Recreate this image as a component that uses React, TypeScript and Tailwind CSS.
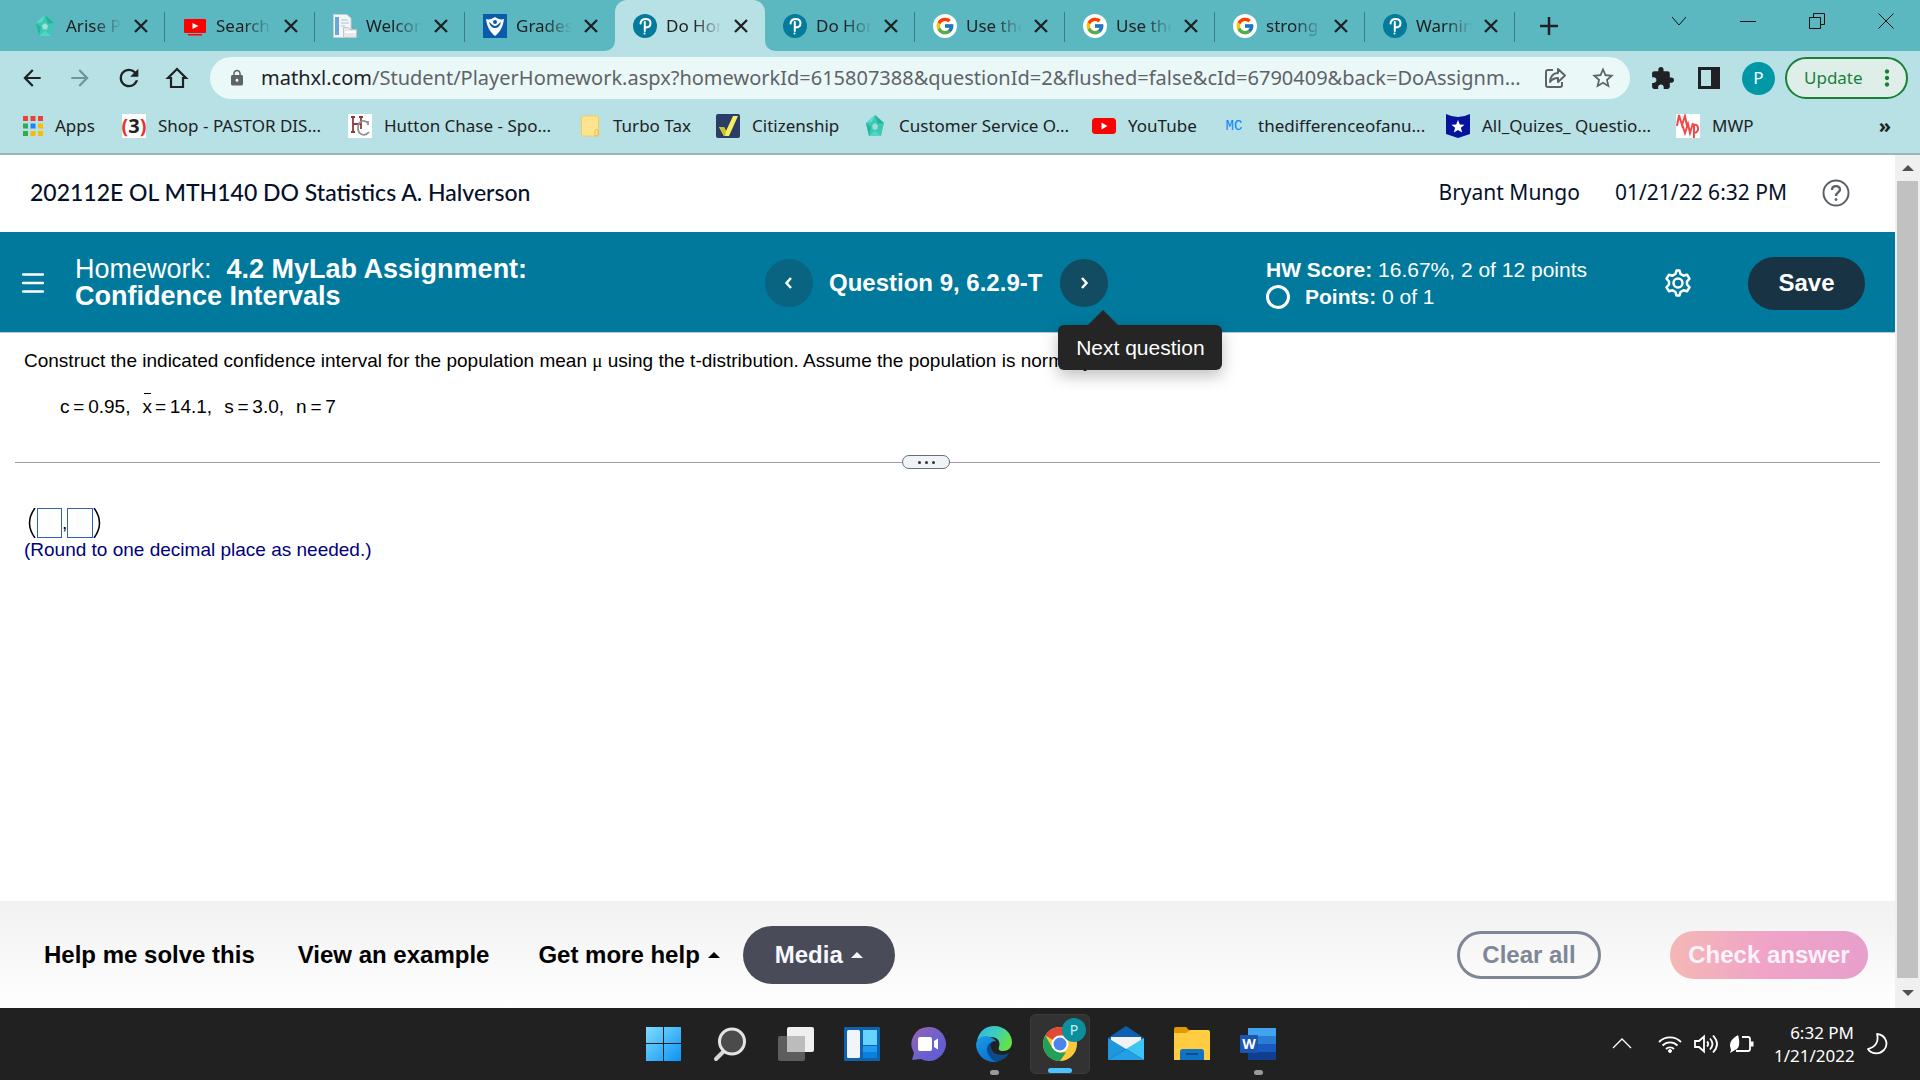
import type { ReactNode } from 'react';
import { FcGoogle } from 'react-icons/fc';
import {
  MdArrowBack,
  MdArrowForward,
  MdRefresh,
  MdLock,
  MdStarBorder,
  MdExtension,
  MdMoreVert,
} from 'react-icons/md';

/* ---------- favicons ---------- */

function PentagonIcon() {
  return (
    <svg viewBox="0 0 24 24" className="size-6">
      <path d="M12 1 21 9 18 22 6 22 3 9Z" fill="#3cc8b4" />
      <path d="M12 1 21 9 15 9.500Z" fill="#23b39c" />
      <path d="M3 9 12 1 9 8Z" fill="#5fdccb" />
      <path d="M6 22 3 9 8 13Z" fill="#22b8a0" />
      <path d="M18 22 6 22 12 17Z" fill="#55d6c4" />
      <path d="M12 9 15 11.500 14 15.500 10 15.500 9 11.500Z" fill="#9fded9" />
    </svg>
  );
}

function YouTubeTabIcon() {
  return (
    <svg viewBox="0 0 24 24" className="size-6">
      <rect x="1" y="5" width="22" height="14" rx="1" fill="#f00" />
      <rect x="5" y="20" width="14" height="1.500" fill="#f00" />
      <path d="M9.500 9v6l6-3Z" fill="#fff" />
    </svg>
  );
}

function YouTubeIcon() {
  return (
    <svg viewBox="0 0 24 24" className="size-6">
      <rect y="4" width="24" height="16" rx="3.500" fill="#f00" />
      <path d="M9.500 8.500v7l6-3.500Z" fill="#fff" />
    </svg>
  );
}

function DocumentIcon() {
  return (
    <svg viewBox="0 0 24 24" className="size-6">
      <path d="M.5.5H14l4 4v19H.5Z" fill="#f4f7fa" stroke="#c3d0da" />
      <rect x="2" y="3" width="4" height="18" fill="#6aa5da" />
      <path d="M8 6h7M8 9h8M8 12h4" stroke="#b5c3ce" />
      <path d="M10.500 13.500h5l1 2h7v8h-13Z" fill="#e6e8ea" stroke="#bfc5ca" />
      <path d="M12 18h11" stroke="#fff" strokeWidth="2" />
    </svg>
  );
}

function ShieldIcon() {
  return (
    <svg viewBox="0 0 24 24" className="size-6">
      <rect width="24" height="24" fill="#0a5bab" />
      <path d="M3 5c3 1 6 0 9-2 3 2 6 3 9 2-1 8-4 13-9 17C7 18 4 13 3 5Z" fill="#fff" />
      <circle cx="12" cy="8" r="2" fill="#0a5bab" />
      <path d="M6 8c2 1 4 4 6 4s4-3 6-4c-1 4-3 6-6 6s-5-2-6-6Z" fill="#0a5bab" />
    </svg>
  );
}

function PearsonIcon() {
  return (
    <svg viewBox="0 0 24 24" className="size-6">
      <circle cx="12" cy="12" r="12" fill="#047a9c" />
      <path
        d="M7.500 9.500C8 6.500 10 5 12.500 5c3 0 5 1.800 5 4.300 0 2.600-2.200 4.200-5.500 4.200M11.800 8v9"
        fill="none"
        stroke="#fff"
        strokeWidth="2"
        strokeLinecap="round"
      />
      <circle cx="11.500" cy="19.500" r="1" fill="#fff" />
    </svg>
  );
}

function GoogleIcon() {
  return (
    <span className="flex size-6 items-center justify-center rounded-full bg-white">
      <FcGoogle size={20} />
    </span>
  );
}

/* ---------- bookmark icons ---------- */

const appColors = ['#ea4335', '#ea4335', '#ea4335', '#34a853', '#1a84ff', '#fbbc04', '#34a853', '#fbbc04', '#fbbc04'];

function AppsIcon() {
  return (
    <svg viewBox="0 0 20 20" className="size-5">
      {appColors.map((color, i) => (
        <rect key={i} x={(i % 3) * 7.5} y={Math.floor(i / 3) * 7.5} width="5" height="5" fill={color} />
      ))}
    </svg>
  );
}

function ThreeIcon() {
  return (
    <span className="flex size-6 items-center justify-center bg-white text-[20px] leading-6 font-bold text-[#222]">
      <span className="text-[#e5352b]">(</span>3<span className="text-[#e5352b]">)</span>
    </span>
  );
}

function HuttonIcon() {
  return (
    <svg viewBox="0 0 24 24" className="size-6">
      <rect width="24" height="24" fill="#fff" />
      <path d="M5 3v15M13 3v12M5 10h8M3 3h4M11 3h4M3 18h4" fill="none" stroke="#8a3b40" strokeWidth="1.800" />
      <path d="M20 11V7M20 9c-6-5-10 0-10 5 0 7 7 9 11 4" fill="none" stroke="#909090" strokeWidth="1.800" />
    </svg>
  );
}

function FolderIcon() {
  return (
    <svg viewBox="0 0 20 24" className="h-6 w-5">
      <rect x="0.500" y="2" width="17" height="20" rx="1" fill="#ffe48f" stroke="#f1cc58" />
      <path d="M14 22v-5q0-1.500 1.500-1.500T17 17v3q0 2-2 2Z" fill="#ffe9a8" stroke="#e6b93c" />
    </svg>
  );
}

function CheckIcon() {
  return (
    <svg viewBox="0 0 24 24" className="size-6">
      <rect width="24" height="24" rx="2" fill="#2b3c66" />
      <path d="M3 13h5l2 4L17 2h5L13 22H8Z" fill="#f4ef5c" />
      <path d="M3 13h5l2 4-1 5H8Z" fill="#c9c32c" />
    </svg>
  );
}

function McIcon() {
  return (
    <span className="w-6 text-center font-['Liberation_Mono',monospace] text-[14px] leading-6 text-[#0a84ff]">MC</span>
  );
}

function PennantIcon() {
  return (
    <svg viewBox="0 0 24 24" className="size-6">
      <path d="M0 0q12 6 24 0v20l-12 4L0 20Z" fill="#06149c" />
      <path d="m12 6 1.800 4.500 4.700.3-3.600 3 1.200 4.700L12 16l-4.100 2.500 1.200-4.700-3.600-3 4.700-.3Z" fill="#fff" />
    </svg>
  );
}

function MwpIcon() {
  return (
    <svg viewBox="0 0 24 24" className="size-6">
      <rect width="24" height="24" fill="#fff" />
      <path
        d="M1 12 3 1l3 10L9 2l2 10M6 10l3 9 3-9 2 9 3-10M18 24V11c5-2 6 8 0 8"
        fill="none"
        stroke="#f04a4a"
        strokeWidth="2"
      />
    </svg>
  );
}

/* ---------- taskbar icons ---------- */

function StartIcon() {
  return (
    <svg viewBox="0 0 36 36" className="size-9">
      <defs>
        <linearGradient id="win" x1="0" y1="0" x2="1" y2="1">
          <stop offset="0" stopColor="#7fdcff" />
          <stop offset="1" stopColor="#0a93f5" />
        </linearGradient>
      </defs>
      <path d="M0 1h17v16H0ZM18 1h17v16H18ZM0 18h17v17H0ZM18 18h17v17H18Z" fill="url(#win)" />
    </svg>
  );
}

function SearchIcon() {
  return (
    <svg viewBox="0 0 36 36" className="size-9">
      <path d="m12 25-8 8" stroke="#d4d7da" strokeWidth="4" strokeLinecap="round" />
      <circle cx="20" cy="15.500" r="12.500" fill="#4b4b4b" stroke="#e2e4e6" strokeWidth="3" />
    </svg>
  );
}

function TaskViewIcon() {
  return (
    <svg viewBox="0 0 36 36" className="size-9">
      <rect x="0" y="10" width="27" height="25" rx="2" fill="#5d5d5d" />
      <rect x="9" y="1" width="27" height="25" rx="2" fill="#efefef" />
      <path d="M9 10h18v16H9Z" fill="#bcbcbc" />
    </svg>
  );
}

function WidgetsIcon() {
  return (
    <svg viewBox="0 0 36 36" className="size-9">
      <rect y="1" width="36" height="34" rx="1" fill="#0f62ac" />
      <rect x="3" y="4" width="13" height="28" rx="1.500" fill="#f2f5f8" />
      <rect x="19" y="4" width="14" height="15" fill="#66d2ff" />
      <rect x="19" y="20" width="14" height="6" fill="#1f9cf0" />
      <rect x="19" y="26" width="14" height="6" fill="#0a80e0" />
    </svg>
  );
}

function ChatIcon() {
  return (
    <svg viewBox="0 0 36 36" className="size-9">
      <defs>
        <linearGradient id="chat" x1="0" y1="0" x2="1" y2="1">
          <stop offset="0" stopColor="#9a62b0" />
          <stop offset="0.500" stopColor="#6f62cc" />
          <stop offset="1" stopColor="#5a5ad6" />
        </linearGradient>
      </defs>
      <path d="M18 1a17 17 0 1 1-7 32l-9 1 2-7A17 17 0 0 1 18 1Z" fill="url(#chat)" />
      <rect x="8" y="11" width="14" height="14" rx="2" fill="#fff" />
      <path d="m24 15 4-2.500v11L24 21Z" fill="#fff" />
    </svg>
  );
}

function EdgeIcon() {
  return (
    <svg viewBox="0 0 36 36" className="size-9">
      <defs>
        <linearGradient id="edgeTop" x1="0" y1="0" x2="1" y2="0.4">
          <stop offset="0" stopColor="#2fb4e8" />
          <stop offset="0.600" stopColor="#3dcfb8" />
          <stop offset="1" stopColor="#66e04a" />
        </linearGradient>
        <linearGradient id="edgeLeft" x1="0" y1="0" x2="0.600" y2="1">
          <stop offset="0" stopColor="#1b9de2" />
          <stop offset="1" stopColor="#0b6fd0" />
        </linearGradient>
      </defs>
      <path d="M1 15C3 5 10 0 18 0c11 0 18 8 18 16 0 6-4 9-9 9-4 0-5-2-4-4 2-6-2-10-8-10C8 11 3 13 1 15Z" fill="url(#edgeTop)" />
      <path d="M0 18C1 12 8 8 14 11c3 1 5 3 6 4-6 0-8 5-6 10s7 8 12 8c-3 2-5 3-8 3C8 36 0 28 0 18Z" fill="url(#edgeLeft)" />
      <path d="M14 17c-5 3-4 12 4 18 6 1 12-2 15-8-5 3-13 2-16-1-2-3-2-6-3-9Z" fill="#0c4a8c" />
    </svg>
  );
}

function ChromeIcon() {
  return (
    <span className="relative">
      <svg viewBox="0 0 36 36" className="size-9">
        <circle cx="18" cy="18" r="17" fill="#fbc83c" />
        <path d="M18 18 3.300 9.500a17 17 0 0 1 29.400 0H18Z" fill="#e0483a" />
        <path d="M18 35A17 17 0 0 1 3.300 9.500L10.600 22.300 18 26.500l6 0Z" fill="#22a05a" />
        <circle cx="18" cy="18" r="8.500" fill="#fff" />
        <circle cx="18" cy="18" r="6.500" fill="#4c85ea" />
      </svg>
      <span className="absolute -top-2 left-5 flex size-6 items-center justify-center rounded-full bg-[#0b8f9c] text-[14px] leading-4 text-[#c6eff1]">
        P
      </span>
    </span>
  );
}

function MailIcon() {
  return (
    <svg viewBox="0 0 36 36" className="size-9">
      <path d="M0 12 18 0l18 12v8H0Z" fill="#0d5fb0" />
      <path d="M3 11h30v12H3Z" fill="#f2f2f2" />
      <path d="M0 12 18 23 0 34Z" fill="#1f96e0" />
      <path d="M36 12v22L18 23Z" fill="#3cc4f5" />
      <path d="M0 34 18 23l18 11Z" fill="#249fe6" />
    </svg>
  );
}

function ExplorerIcon() {
  return (
    <svg viewBox="0 0 36 36" className="size-9">
      <path d="M0 3q0-2 2-2h10l4 4v5H0Z" fill="#e09a00" />
      <path d="M0 7h12l4-3h18q2 0 2 2v28H0Z" fill="#ffcd3f" />
      <path d="M6 34v-8q0-3 3-3h18q3 0 3 3v8Z" fill="#1173c4" />
      <path d="M12 28h12" stroke="#0a4d8c" strokeWidth="2" />
    </svg>
  );
}

function WordIcon() {
  return (
    <svg viewBox="0 0 36 36" className="size-9">
      <rect x="8" y="2" width="28" height="8" fill="#41a5ee" />
      <rect x="8" y="10" width="28" height="8" fill="#2b7cd3" />
      <rect x="8" y="18" width="28" height="8" fill="#185abd" />
      <rect x="8" y="26" width="28" height="8" fill="#103f91" />
      <rect x="0" y="9" width="18" height="18" rx="1" fill="#1a54b4" />
      <text x="9" y="23" textAnchor="middle" fontSize="14" fontWeight="700" fill="#fff">W</text>
    </svg>
  );
}

/* ---------- data ---------- */

interface Tab {
  title: string;
  icon: ReactNode;
  active?: boolean;
}

const tabs: Tab[] = [
  { title: 'Arise Portal', icon: <PentagonIcon /> },
  { title: 'Search', icon: <YouTubeTabIcon /> },
  { title: 'Welcome', icon: <DocumentIcon /> },
  { title: 'Grades', icon: <ShieldIcon /> },
  { title: 'Do Homework', icon: <PearsonIcon />, active: true },
  { title: 'Do Homework', icon: <PearsonIcon /> },
  { title: 'Use the', icon: <GoogleIcon /> },
  { title: 'Use the', icon: <GoogleIcon /> },
  { title: 'strong', icon: <GoogleIcon /> },
  { title: 'Warning', icon: <PearsonIcon /> },
];

const bookmarks = [
  { label: 'Apps', icon: <AppsIcon />, width: 'w-[99px]' },
  { label: 'Shop - PASTOR DIS...', icon: <ThreeIcon />, width: 'w-[226px]' },
  { label: 'Hutton Chase - Spo...', icon: <HuttonIcon />, width: 'w-[233px]' },
  { label: 'Turbo Tax', icon: <FolderIcon />, width: 'w-[135px]' },
  { label: 'Citizenship', icon: <CheckIcon />, width: 'w-[147px]' },
  { label: 'Customer Service O...', icon: <PentagonIcon />, width: 'w-[229px]' },
  { label: 'YouTube', icon: <YouTubeIcon />, width: 'w-[130px]' },
  { label: 'thedifferenceofanu...', icon: <McIcon />, width: 'w-[224px]' },
  { label: 'All_Quizes_ Questio...', icon: <PennantIcon />, width: 'w-[230px]' },
  { label: 'MWP', icon: <MwpIcon />, width: 'w-[80px]' },
];

const taskbarApps = [
  { name: 'Start', icon: <StartIcon /> },
  { name: 'Search', icon: <SearchIcon /> },
  { name: 'Task view', icon: <TaskViewIcon /> },
  { name: 'Widgets', icon: <WidgetsIcon /> },
  { name: 'Chat', icon: <ChatIcon /> },
  { name: 'Edge', icon: <EdgeIcon />, running: true },
  { name: 'Chrome', icon: <ChromeIcon />, focused: true },
  { name: 'Mail', icon: <MailIcon /> },
  { name: 'File Explorer', icon: <ExplorerIcon /> },
  { name: 'Word', icon: <WordIcon />, running: true },
];

/* ---------- browser chrome ---------- */

function TabStrip() {
  return (
    <div className="flex h-[51px] bg-[#5bb8c1] pl-[15px]">
      {tabs.map((tab, i) => (
        <div
          key={i}
          className={`relative flex w-[150px] items-center pl-[18px] ${tab.active ? 'rounded-t-xl bg-[#b7e1e4]' : ''}`}
        >
          {tab.icon}
          <span className="ml-[9px] w-[56px] overflow-hidden mask-r-from-50% text-[17px] whitespace-nowrap">
            {tab.title}
          </span>
          <button aria-label="Close tab" className="ml-3">
            <svg viewBox="0 0 14 14" className="size-3.5"><path d="m1 1 12 12m0-12L1 13" stroke="currentColor" strokeWidth="2.300" /></svg>
          </button>
          {!tab.active && !tabs[i + 1]?.active && (
            <span className="absolute top-3 right-0 h-[30px] w-px bg-[#3d7b81]" />
          )}
          {tab.active && (
            <>
              <svg viewBox="0 0 10 10" className="absolute bottom-0 -left-2.5 size-2.5">
                <path d="M10 0v10H0A10 10 0 0 0 10 0Z" fill="#b7e1e4" />
              </svg>
              <svg viewBox="0 0 10 10" className="absolute -right-2.5 bottom-0 size-2.5">
                <path d="M0 0v10h10A10 10 0 0 1 0 0Z" fill="#b7e1e4" />
              </svg>
            </>
          )}
        </div>
      ))}
      <button aria-label="New tab" className="ml-[25px] self-center">
        <svg viewBox="0 0 18 18" className="size-[18px]"><path d="M9 0v18M0 9h18" stroke="currentColor" strokeWidth="2.500" /></svg>
      </button>
      <div className="ml-auto flex h-[42px] items-center">
        <button aria-label="Search tabs" className="flex w-[69px] justify-center">
          <svg viewBox="0 0 16 16" className="size-4"><path d="m1 4 7 8 7-8" fill="none" stroke="#111" /></svg>
        </button>
        <button aria-label="Minimize" className="flex w-[69px] justify-center">
          <svg viewBox="0 0 16 16" className="size-4"><path d="M0 8.500h16" stroke="#111" /></svg>
        </button>
        <button aria-label="Restore" className="flex w-[69px] justify-center">
          <svg viewBox="0 0 16 16" className="size-4">
            <path d="M.5 4.500h11v11H.5ZM4.500 4.500v-4h11v11h-4" fill="none" stroke="#111" />
          </svg>
        </button>
        <button aria-label="Close window" className="flex w-[69px] justify-center">
          <svg viewBox="0 0 16 16" className="size-4"><path d="m.5.5 15 15m0-15-15 15" stroke="#111" /></svg>
        </button>
      </div>
    </div>
  );
}

function Toolbar() {
  return (
    <div className="flex h-[54px] items-center pr-3 pl-[19px]">
      <div className="flex w-[191px] items-center gap-[22px]">
        <button aria-label="Back"><MdArrowBack size={26} /></button>
        <button aria-label="Forward" className="text-[#6f9598]"><MdArrowForward size={26} /></button>
        <button aria-label="Reload"><MdRefresh size={28} /></button>
        <button aria-label="Home">
          <svg viewBox="0 0 24 24" className="size-6">
            <path d="M12 3 3 12h3v9h12v-9h3Z" fill="none" stroke="currentColor" strokeWidth="2.200" />
          </svg>
        </button>
      </div>
      <div className="flex h-[42px] min-w-0 flex-1 items-center rounded-full bg-[#ebf8f8] pr-[14px] pl-[18px] text-[#5f6368]">
        <MdLock size={18} />
        <span className="ml-[15px] min-w-0 flex-1 text-[20px] whitespace-nowrap">
          <span className="text-[#202124]">mathxl.com</span>
          /Student/PlayerHomework.aspx?homeworkId=615807388&amp;questionId=2&amp;flushed=false&amp;cId=6790409&amp;back=DoAssignm...
        </span>
        <button aria-label="Share" className="ml-5">
          <svg viewBox="0 0 24 24" className="size-6" fill="none" stroke="currentColor" strokeWidth="2">
            <path d="M10 4H5q-2 0-2 2v13q0 2 2 2h12q2 0 2-2v-3" />
            <path d="M15 3v4c-5 0-8 4-8 9 2-3 4-4 8-4v4l7-6.500Z" strokeLinejoin="round" />
          </svg>
        </button>
        <button aria-label="Bookmark" className="ml-[23px]"><MdStarBorder size={26} /></button>
      </div>
      <div className="flex items-center pl-5">
        <button aria-label="Extensions"><MdExtension size={25} /></button>
        <button aria-label="Side panel" className="ml-[23px]">
          <svg viewBox="0 0 22 22" className="size-[22px]">
            <path d="M0 0h22v22H0Zm3 3v16h10V3Z" fill="currentColor" fillRule="evenodd" />
          </svg>
        </button>
        <button className="ml-[22px] size-[33px] rounded-full bg-[#0097a7] text-[17px] text-white">P</button>
        <button className="ml-[10px] flex h-[42px] w-[123px] items-center justify-between rounded-full border-2 border-[#188038] bg-[#dfeee8] pr-1.5 pl-[17px] text-[17px] text-[#188038]">
          Update
          <MdMoreVert size={26} />
        </button>
      </div>
    </div>
  );
}

function BookmarksBar() {
  return (
    <div className="flex h-[50px] items-center border-b-2 border-[#95b7ba] pb-1.5 pl-[23px]">
      {bookmarks.map(b => (
        <a key={b.label} href="#" className={`flex shrink-0 items-center gap-3 text-[17px] whitespace-nowrap ${b.width}`}>
          {b.icon}
          {b.label}
        </a>
      ))}
      <button aria-label="More bookmarks" className="mr-[29px] ml-auto text-[20px] font-bold">»</button>
    </div>
  );
}

/* ---------- page ---------- */

function CourseHeader() {
  return (
    <header className="flex h-[77px] items-center pr-[45px] pb-0.5 pl-[30px] text-[21px] text-[#05112a]">
      <h1 className="font-['Lato',sans-serif] text-[23px] font-medium">202112E OL MTH140 DO Statistics A. Halverson</h1>
      <span className="ml-auto">Bryant Mungo</span>
      <span className="ml-[35px]">01/21/22 6:32 PM</span>
      <button aria-label="Help" className="ml-[35px]">
        <svg viewBox="0 0 28 28" className="size-7" fill="none" stroke="#5b6068" strokeWidth="2">
          <circle cx="14" cy="14" r="12.500" />
          <path d="M10 11c0-5 8-5 8-.5 0 3-4 3-4 6.500" strokeWidth="2.300" />
          <circle cx="14" cy="20.500" r="1" fill="#5b6068" strokeWidth="1" />
        </svg>
      </button>
    </header>
  );
}

function HomeworkBar() {
  return (
    <div className="grid h-[101px] grid-cols-[765px_auto_1fr] items-center border-b border-[#b9c8dc] bg-[#00799c] pt-0.5 font-['Liberation_Sans',sans-serif] text-white">
      <div className="flex items-center pl-[22px]">
        <button aria-label="Menu">
          <svg viewBox="0 0 22 20" className="h-5 w-[22px]">
            <path d="M1 1.500h20M1 10h20M1 18.500h20" stroke="#fff" strokeWidth="2.500" strokeLinecap="round" />
          </svg>
        </button>
        <h2 className="ml-[31px] w-[480px] text-[27px] leading-[27px]">
          Homework:&nbsp; <strong>4.2 MyLab Assignment: Confidence Intervals</strong>
        </h2>
      </div>
      <div className="flex items-center">
        <button aria-label="Previous question" className="flex size-12 items-center justify-center rounded-full bg-[#096481]">
          <svg viewBox="0 0 12 12" className="size-3"><path d="M8 1 3.500 6 8 11" fill="none" stroke="#fff" strokeWidth="2.500" /></svg>
        </button>
        <h2 className="mr-[18px] ml-4 text-[24px] font-bold whitespace-nowrap">Question 9, 6.2.9-T</h2>
        <div className="relative">
          <button aria-label="Next question" className="flex size-12 items-center justify-center rounded-full bg-[#124c63]">
            <svg viewBox="0 0 12 12" className="size-3"><path d="m4 1 4.500 5L4 11" fill="none" stroke="#fff" strokeWidth="2.500" /></svg>
          </button>
          <div role="tooltip" className="absolute top-[66px] -left-[2px] z-10 flex h-[45px] w-[164px] items-center justify-center rounded-md bg-[#252525] text-[21px] whitespace-nowrap shadow-[0_6px_16px_rgba(0,0,0,0.25)]">
            <svg viewBox="0 0 30 15" className="absolute -top-[15px] left-[30px] h-[15px] w-[30px]">
              <path d="M0 15 15 0l15 15Z" fill="#252525" />
            </svg>
            Next question
          </div>
        </div>
      </div>
      <div className="flex items-center pr-[30px]">
        <div className="ml-auto w-[398px] text-[21px] leading-[27px]">
          <p><strong>HW Score:</strong> 16.67%, 2 of 12 points</p>
          <p className="flex items-center">
            <span className="mr-[15px] size-6 rounded-full border-[3px] border-white" />
            <span><strong>Points:</strong> 0 of 1</span>
          </p>
        </div>
        <button aria-label="Settings" className="mr-[56px]">
          <svg viewBox="0 0 28 28" className="size-7" fill="none" stroke="#fff" strokeWidth="2.500" strokeLinejoin="round">
            <path d="m11.500 5 1-3.500h3l1 3.500 3 1.700 3.500-1 2.500 4-2.500 2.800v3l2.500 2.800-2.500 4-3.500-1-3 1.700-1 3.500h-3l-1-3.500-3-1.700-3.500 1-2.500-4L5 15.500v-3L2.500 9.700l2.500-4 3.500 1Z" />
            <circle cx="14" cy="14" r="4.500" />
          </svg>
        </button>
        <button className="h-[53px] w-[117px] rounded-full bg-[#173344] text-[24px] font-bold">Save</button>
      </div>
    </div>
  );
}

function Exercise() {
  return (
    <main className="flex-1 pr-[15px] pl-6 font-['Liberation_Sans',sans-serif] text-[19px] leading-6 text-black">
      <p className="mt-4">
        Construct the indicated confidence interval for the population mean <span className="font-['Liberation_Serif',serif]">μ</span>{' '}
        using the t-distribution. Assume the population is normally distributed.
      </p>
      <p className="mt-[22px] ml-9 flex gap-3">
        <span>c&thinsp;=&thinsp;0.95,</span>
        <span className="flex gap-[3px]">
          <span className="relative">
            x<span className="absolute -top-0.5 left-0.5 h-px w-[7px] bg-black" />
          </span>
          =&thinsp;14.1,
        </span>
        <span>s&thinsp;=&thinsp;3.0,</span>
        <span>n&thinsp;=&thinsp;7</span>
      </p>
      <div className="relative mt-[36px] -ml-[9px] flex h-[14px] items-center">
        <hr className="flex-1 border-[#a59aa6]" />
        <button aria-label="Resize panels" className="absolute left-[887px] flex h-[14px] w-[48px] items-center justify-center gap-1 rounded-full border border-[#62707e] bg-[#f1f4f6]">
          <span className="size-[3px] rounded-full bg-[#333]" />
          <span className="size-[3px] rounded-full bg-[#333]" />
          <span className="size-[3px] rounded-full bg-[#333]" />
        </button>
      </div>
      <div className="mt-[39px] ml-1 flex h-[30px] items-center">
        <svg viewBox="0 0 9 30" className="h-[30px] w-[9px]"><path d="M7 0Q-4 15 7 30" fill="none" stroke="#000" strokeWidth="1.500" /></svg>
        <input aria-label="Lower limit" className="h-[30px] w-[25px] border border-[#2a62c4]" />
        <span className="w-[5px] text-center">,</span>
        <input aria-label="Upper limit" className="h-[30px] w-[26px] border border-[#2a62c4]" />
        <svg viewBox="0 0 9 30" className="h-[30px] w-[9px]"><path d="M1 0q11 15 0 30" fill="none" stroke="#000" strokeWidth="1.500" /></svg>
      </div>
      <p className="text-[#00007d]">(Round to one decimal place as needed.)</p>
    </main>
  );
}

function UpTriangle() {
  return (
    <svg viewBox="0 0 12 6" className="h-1.5 w-3"><path d="M0 6 6 0l6 6Z" fill="currentColor" /></svg>
  );
}

function ActionBar() {
  return (
    <footer className="flex h-[107px] items-center bg-linear-to-b from-[#f1f1f1] to-white pr-[27px] pl-[44px] font-['Liberation_Sans',sans-serif] text-[24px] font-bold text-black">
      <button>Help me solve this</button>
      <button className="ml-[43px]">View an example</button>
      <button className="ml-[49px] flex items-center gap-2">
        Get more help <UpTriangle />
      </button>
      <button className="ml-[23px] flex h-[58px] w-[152px] items-center justify-center gap-2 rounded-full bg-[#494c58] text-[#f7f7ff]">
        Media <UpTriangle />
      </button>
      <button className="ml-auto h-12 w-[144px] rounded-full border-3 border-[#7f8796] text-[#7f8796]">Clear all</button>
      <button className="ml-[69px] h-12 w-[198px] rounded-full bg-linear-to-r from-[#f4b8b4] via-[#f0a3c8] to-[#e79fcb] text-[#fbf3fb]">
        Check answer
      </button>
    </footer>
  );
}

function Scrollbar() {
  return (
    <div className="flex w-[25px] flex-col items-center bg-[#f0f0f0]">
      <svg viewBox="0 0 12 6" className="my-[10px] h-1.5 w-3"><path d="M0 6 6 0l6 6Z" fill="#505050" /></svg>
      <div className="w-[21px] flex-1 bg-[#c1c1c1]" />
      <svg viewBox="0 0 12 6" className="my-3 h-1.5 w-3"><path d="m0 0 6 6 6-6Z" fill="#505050" /></svg>
    </div>
  );
}

/* ---------- taskbar ---------- */

function Taskbar() {
  return (
    <div className="relative flex h-[72px] items-center justify-center bg-[#212121] pl-0.5 text-white">
      <div className="flex">
        {taskbarApps.map(app => (
          <div key={app.name} className="flex w-[66px] justify-center">
            <button
              aria-label={app.name}
              className={`relative flex h-[60px] w-[60px] items-center justify-center rounded-md ${
                app.focused ? 'border border-[#3c3c3c] bg-[#323232]' : ''
              }`}
            >
              {app.icon}
              {app.running && <span className="absolute -bottom-px h-[5px] w-[9px] rounded-full bg-[#9a9a9a]" />}
              {app.focused && <span className="absolute bottom-0 h-[5px] w-6 rounded-full bg-[#4cc2ff]" />}
            </button>
          </div>
        ))}
      </div>
      <div className="absolute right-[32px] flex h-full items-center">
        <svg viewBox="0 0 20 20" className="size-5" fill="none" stroke="#fff" strokeWidth="1.300"><path d="m1 14 9-9 9 9" /></svg>
        <svg viewBox="0 0 24 20" className="ml-[26px] h-5 w-6" fill="none" stroke="#fff" strokeWidth="1.800">
          <path d="M1 8a15.500 15.500 0 0 1 22 0M4.500 11.500a10.500 10.500 0 0 1 15 0M8 15a5.700 5.700 0 0 1 8 0" />
          <circle cx="12" cy="17" r="1.500" fill="#fff" strokeWidth="1" />
        </svg>
        <svg viewBox="0 0 24 20" className="ml-3 h-5 w-6" fill="none" stroke="#fff" strokeWidth="1.800">
          <path d="M1 7v6h4l5 4.500v-15L5 7ZM13 7.500q2.500 2.500 0 5M16 4.500q5 5.500 0 11M19 1.500q8 8.500 0 17" />
        </svg>
        <svg viewBox="0 0 24 20" className="ml-3 h-5 w-6" fill="none" stroke="#fff" strokeWidth="1.800">
          <path d="M12 3h6q2 0 2 2v10q0 2-2 2H6" />
          <path d="M22 7.500v5" strokeWidth="3" />
          <path d="M8 1C3 4 0 7 0 12l1 4-1 3 5-3c5-1 5-9 3-15Z" fill="#fff" stroke="none" />
        </svg>
        <div className="ml-5 w-[80px] text-right text-[17px] leading-[23px] whitespace-nowrap">
          <p>6:32 PM</p>
          <p>1/21/2022</p>
        </div>
        <svg viewBox="0 0 22 24" className="ml-3 h-6 w-[22px]" fill="none" stroke="#fff" strokeWidth="1.800">
          <path d="M11 2c9 1 12 10 7 16-5 5-13 4-16-1 8-2 11-8 9-15Z" strokeLinejoin="round" />
        </svg>
      </div>
    </div>
  );
}

export default function App() {
  return (
    <div className="flex min-h-screen flex-col bg-white font-['Noto_Sans','Open_Sans',sans-serif] text-[#202124]">
      <div className="bg-[#b7e1e4]">
        <TabStrip />
        <Toolbar />
        <BookmarksBar />
      </div>
      <div className="flex flex-1">
        <div className="flex min-w-0 flex-1 flex-col">
          <CourseHeader />
          <HomeworkBar />
          <Exercise />
          <ActionBar />
        </div>
        <Scrollbar />
      </div>
      <Taskbar />
    </div>
  );
}
